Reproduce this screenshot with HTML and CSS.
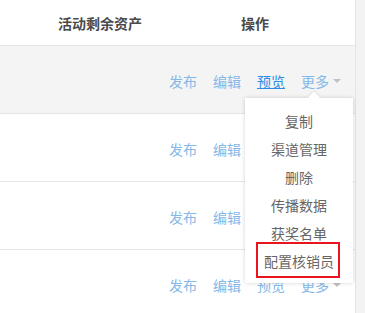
FILE: index.html
```html
<!DOCTYPE html>
<html lang="zh">
<head>
<meta charset="utf-8">
<link rel="stylesheet" href="styles.css">
</head>
<body>
<div class="page">
  <div class="main">
    <div class="head">
      <div class="col1">活动剩余资产</div>
      <div class="col2">操作</div>
    </div>
    <div class="row hover">
      <div class="actions"><a>发布</a><a>编辑</a><a class="active">预览</a><a class="more">更多<span class="caret"></span></a></div>
    </div>
    <div class="row">
      <div class="actions"><a>发布</a><a>编辑</a><a>预览</a><a class="more">更多<span class="caret"></span></a></div>
    </div>
    <div class="row">
      <div class="actions"><a>发布</a><a>编辑</a><a>预览</a><a class="more">更多<span class="caret"></span></a></div>
    </div>
    <div class="row">
      <div class="actions"><a>发布</a><a>编辑</a><a>预览</a><a class="more">更多<span class="caret"></span></a></div>
    </div>
    <div class="menu">
      <div class="item">复制</div>
      <div class="item">渠道管理</div>
      <div class="item">删除</div>
      <div class="item">传播数据</div>
      <div class="item">获奖名单</div>
      <div class="item">配置核销员</div>
      <div class="mark"></div>
    </div>
  </div>
  <div class="strip"></div>
</div>
</body>
</html>
```
FILE: styles.css
```css
html, body {
  margin: 0;
  padding: 0;
  background: #fff;
  font-family: "Noto Sans CJK SC", "Liberation Sans", sans-serif;
  font-size: 14px;
  overflow: hidden;
}
.page {
  display: flex;
  width: 365px;
  height: 313px;
}
.main {
  position: relative;
  width: 355px;
  flex: none;
}
.strip {
  flex: 1;
  background: #f3f3f3;
  border-left: 1px solid #e4e4e4;
}
.head {
  display: flex;
  height: 45px;
  align-items: center;
  border-bottom: 1px solid #e5e5e5;
  font-weight: 600;
  color: #4a4a4a;
}
.col1 { width: 200px; text-align: center; }
.col2 { width: 110px; text-align: center; }
.row {
  height: 67px;
  border-bottom: 1px solid #e5e5e5;
  display: flex;
  align-items: center;
  justify-content: flex-end;
}
.row.hover { background: #f4f4f4; }
.actions {
  display: flex;
  gap: 16px;
  padding-right: 14px;
  align-items: center;
  line-height: 20px;
  padding-top: 2px;
}
.actions a {
  color: #84b8e8;
  cursor: pointer;
}
.actions a.active {
  color: #2b8de4;
  text-decoration: underline;
}
.more {
  display: flex;
  align-items: center;
}
.caret {
  width: 0;
  height: 0;
  margin-left: 4px;
  border-left: 4px solid transparent;
  border-right: 4px solid transparent;
  border-top: 4px solid #c2c2c2;
}
.menu {
  position: absolute;
  left: 245px;
  top: 98px;
  width: 108px;
  box-sizing: border-box;
  padding: 9px 0 8px;
  background: #fff;
  box-shadow: 0 0 4px rgba(0, 0, 0, 0.18);
}
.menu::before {
  content: "";
  position: absolute;
  top: -5px;
  left: 65px;
  width: 8px;
  height: 8px;
  background: #fff;
  transform: rotate(45deg);
  box-shadow: -1px -1px 2px rgba(0, 0, 0, 0.08);
}
.item {
  position: relative;
  height: 28px;
  line-height: 28px;
  text-align: center;
  color: #666;
}
.mark {
  position: absolute;
  left: 11px;
  top: 144px;
  width: 84px;
  height: 36px;
  box-sizing: border-box;
  border: 2px solid #e8141e;
}
```
